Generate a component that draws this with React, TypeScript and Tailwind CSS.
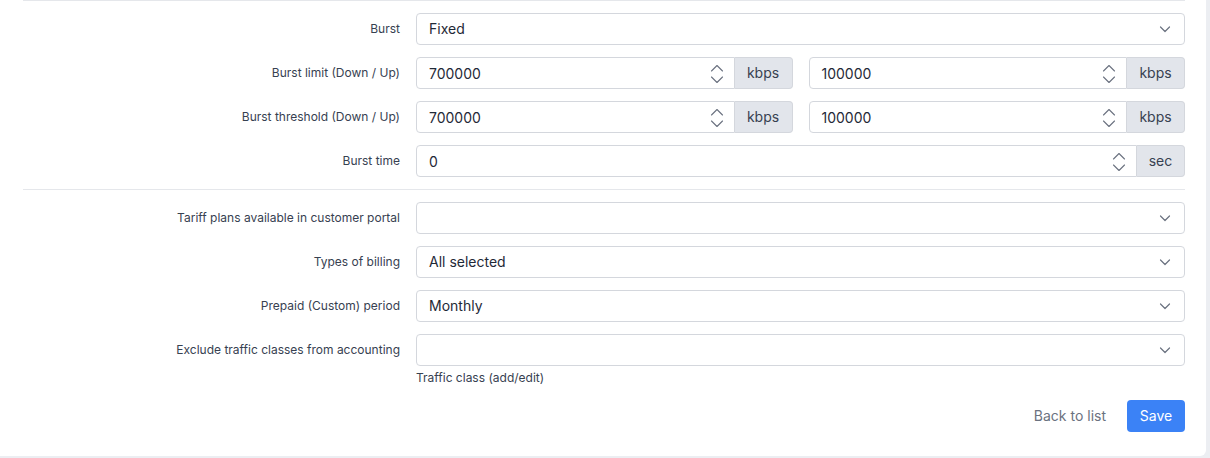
import React from 'react';

const Chevron = () => (
  <svg width="14" height="14" viewBox="0 0 14 14" fill="none" stroke="#6b7280" strokeWidth="1.2" strokeLinecap="round" strokeLinejoin="round">
    <path d="M2.5 5l4.5 4.5L11.5 5" />
  </svg>
);

const Spinner = () => (
  <svg width="14" height="24" viewBox="0 0 14 24" fill="none" stroke="#6b7280" strokeWidth="1.1" strokeLinecap="round" strokeLinejoin="round">
    <path d="M1.5 9l5.5-5.5L12.5 9" />
    <path d="M1.5 15l5.5 5.5L12.5 15" />
  </svg>
);

const Label: React.FC<{ text: string }> = ({ text }) => (
  <div className="w-[377px] shrink-0 h-8 flex items-center justify-end text-xs text-[#374151]">{text}</div>
);

const Select: React.FC<{ value?: string }> = ({ value }) => (
  <div className="flex-1 h-8 border border-[#d4d7dd] rounded bg-white flex items-center justify-between pl-3 pr-3 text-sm text-[#1f2937]">
    <span>{value}</span>
    <Chevron />
  </div>
);

const NumberInput: React.FC<{ value: string; unit: string; unitWidth: string }> = ({ value, unit, unitWidth }) => (
  <div className="flex-1 h-8 flex">
    <div className="flex-1 border border-[#d4d7dd] rounded-l bg-white flex items-center justify-between pl-3 pr-[10px] pt-px text-sm text-[#1f2937]">
      <span>{value}</span>
      <Spinner />
    </div>
    <div className={`${unitWidth} border border-l-0 border-[#d4d7dd] rounded-r bg-[#e2e5eb] flex items-center justify-center text-sm text-[#374151]`}>
      {unit}
    </div>
  </div>
);

const Row: React.FC<{ label: string; children: React.ReactNode }> = ({ label, children }) => (
  <div className="flex gap-4">
    <Label text={label} />
    <div className="flex-1 flex gap-4">{children}</div>
  </div>
);

export default function App() {
  return (
    <div className="w-[1210px] h-[458px] bg-[#eceef2]" style={{ fontFamily: 'Inter, "Noto Sans", sans-serif' }}>
      <div className="w-[1206px] h-[456px] bg-white rounded-br-md pl-[23px] pr-[21px]">
        <div className="border-t border-[#e5e7eb]" />
        <div className="flex flex-col gap-3 pt-3">
          <Row label="Burst">
            <Select value="Fixed" />
          </Row>
          <Row label="Burst limit (Down / Up)">
            <NumberInput value="700000" unit="kbps" unitWidth="w-[58px]" />
            <NumberInput value="100000" unit="kbps" unitWidth="w-[58px]" />
          </Row>
          <Row label="Burst threshold (Down / Up)">
            <NumberInput value="700000" unit="kbps" unitWidth="w-[58px]" />
            <NumberInput value="100000" unit="kbps" unitWidth="w-[58px]" />
          </Row>
          <Row label="Burst time">
            <NumberInput value="0" unit="sec" unitWidth="w-[48px]" />
          </Row>
        </div>
        <div className="border-t border-[#e5e7eb] mt-3" />
        <div className="flex flex-col gap-3 pt-3">
          <Row label="Tariff plans available in customer portal">
            <Select />
          </Row>
          <Row label="Types of billing">
            <Select value="All selected" />
          </Row>
          <Row label="Prepaid (Custom) period">
            <Select value="Monthly" />
          </Row>
          <div>
            <Row label="Exclude traffic classes from accounting">
              <Select />
            </Row>
            <div className="pl-[393px] pt-[4px] text-xs text-[#374151] leading-4">Traffic class (add/edit)</div>
          </div>
        </div>
        <div className="flex justify-end items-center gap-[21px] mt-[14px]">
          <span className="text-sm text-[#6b7280]">Back to list</span>
          <button className="h-8 w-[58px] rounded bg-[#3b82f6] text-white text-sm">Save</button>
        </div>
      </div>
    </div>
  );
}
